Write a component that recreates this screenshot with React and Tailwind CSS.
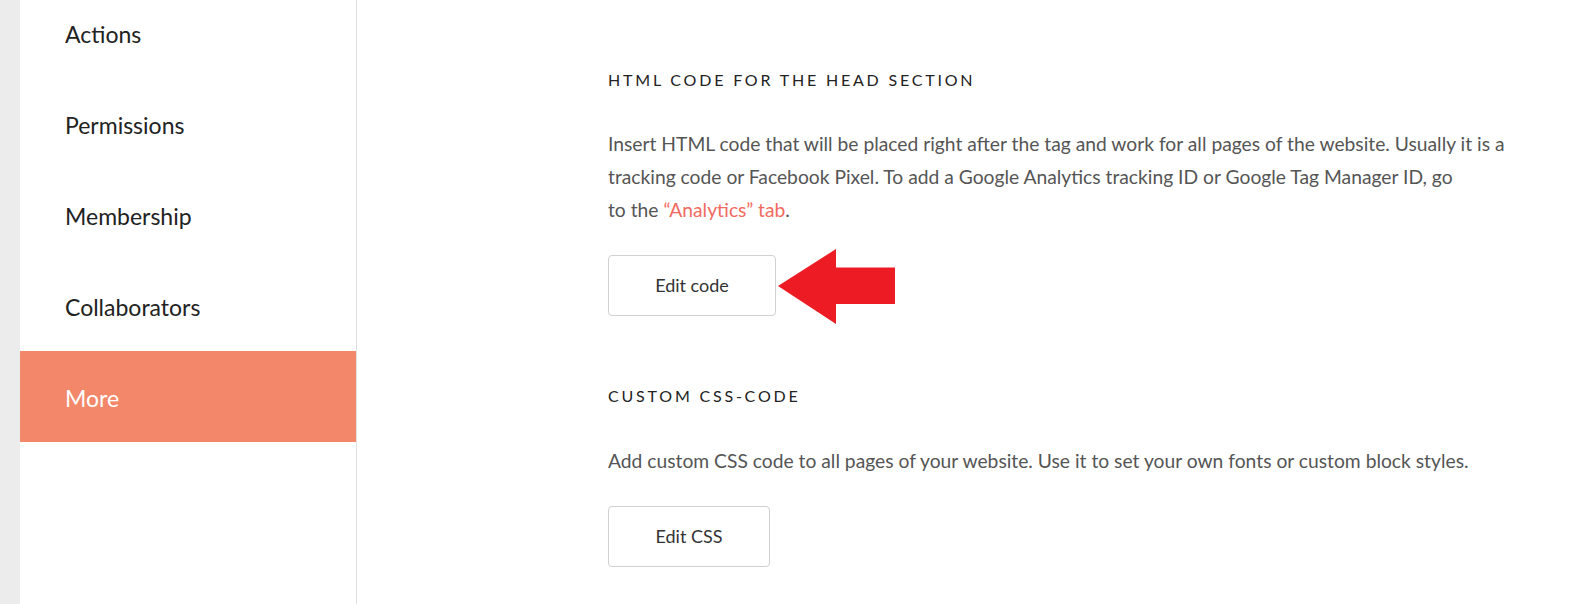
import React from 'react'

const menu = ['Actions', 'Permissions', 'Membership', 'Collaborators', 'More']

function RedArrow() {
  return (
    <svg className="absolute left-[170px] top-[-6px]" width="117" height="75" viewBox="0 0 117 75">
      <polygon points="0,37 58,0 58,18.5 117,18.5 117,55 58,55 58,75" fill="#ed1c24" />
    </svg>
  )
}

export default function App() {
  return (
    <div className="flex h-[604px] w-[1582px] overflow-hidden bg-white font-['Lato',sans-serif]">
      {/* left gutter */}
      <div className="w-[20px] shrink-0 bg-[#ececec]" />

      {/* Sidebar */}
      <div className="w-[337px] shrink-0 border-r border-[#e1e1e1] bg-white">
        <div className="-mt-[13px]">
          {menu.map((item) => (
            <div
              key={item}
              className={`flex h-[91px] items-center pl-[45px] pt-[4px] text-[23px] ${
                item === 'More' ? 'bg-[#f2876a] text-white' : 'text-[#222]'
              }`}
            >
              {item}
            </div>
          ))}
        </div>
      </div>

      {/* Main */}
      <div className="flex-1 pl-[251px] pt-[68px] pr-[60px]">
        <h2 className="text-[16px] leading-[24px] uppercase tracking-[2.8px] text-[#222]">
          HTML code for the head section
        </h2>
        <p className="mt-[35px] max-w-[910px] text-[19.25px] leading-[33px] text-[#555]">
          Insert HTML code that will be placed right after the tag and work for all pages of the website. Usually it is a
          tracking code or Facebook Pixel. To add a Google Analytics tracking ID or Google Tag Manager ID, go
          <br />
          to the <a href="#" className="text-[#f06a60]">“Analytics” tab</a>.
        </p>
        <div className="relative mt-[29px] w-[168px]">
          <button className="h-[61px] w-[168px] rounded-[4px] border border-[#d0d0d0] bg-white text-[18px] text-[#333]">
            Edit code
          </button>
          <RedArrow />
        </div>

        <h2 className="mt-[68px] text-[16px] leading-[24px] uppercase tracking-[2.8px] text-[#222]">
          Custom CSS-code
        </h2>
        <p className="mt-[36px] text-[19.25px] leading-[33px] text-[#555]">
          Add custom CSS code to all pages of your website. Use it to set your own fonts or custom block styles.
        </p>
        <button className="mt-[29px] h-[61px] w-[162px] rounded-[4px] border border-[#d0d0d0] bg-white text-[18px] text-[#333]">
          Edit CSS
        </button>
      </div>
    </div>
  )
}
